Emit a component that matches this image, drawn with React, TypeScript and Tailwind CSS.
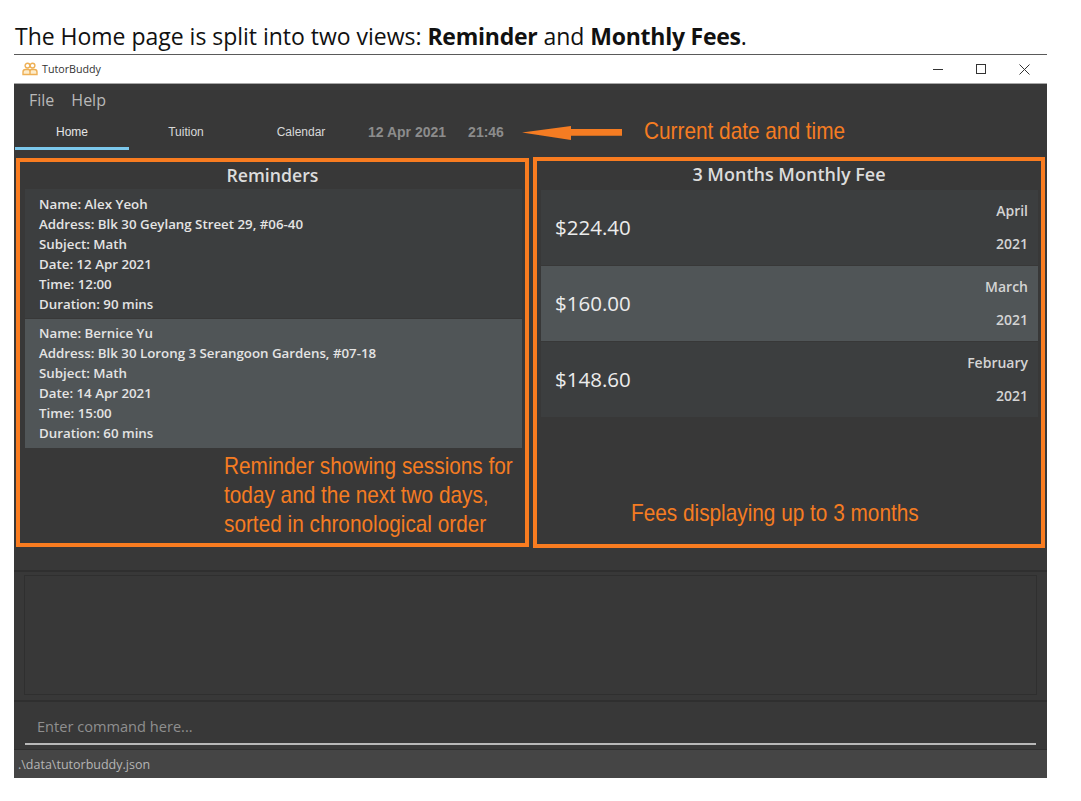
import React from 'react'

const ui = "font-['Open_Sans','Noto_Sans',sans-serif]"
// the callouts are a narrowed Arial in the picture
const note = "font-['Liberation_Sans',Arial,sans-serif] text-[#f57c22] text-[24px] leading-[29px] whitespace-nowrap origin-left scale-x-[0.866]"

const reminders = [
  { name: 'Alex Yeoh', address: 'Blk 30 Geylang Street 29, #06-40', date: '12 Apr 2021', time: '12:00', mins: 90 },
  { name: 'Bernice Yu', address: 'Blk 30 Lorong 3 Serangoon Gardens, #07-18', date: '14 Apr 2021', time: '15:00', mins: 60 },
]

const fees = [
  { amount: '$224.40', month: 'April' },
  { amount: '$160.00', month: 'March' },
  { amount: '$148.60', month: 'February' },
]

const AppIcon = () => (
  <svg width="16" height="14" viewBox="0 0 16 14" fill="none" stroke="#eeb055" strokeWidth="1.4">
    <circle cx="5.5" cy="3.6" r="2.4" />
    <circle cx="10.5" cy="3.6" r="2.4" />
    <path d="M1 12.5v-2.5c0-1.5 1.2-2.5 2.5-2.5h3c1.3 0 1.5 1 1.5 2.5v2.5zM8 12.5v-2.5c0-1.5.2-2.5 1.5-2.5h3c1.3 0 2.5 1 2.5 2.5v2.5z" fill="#fdeccb" />
  </svg>
)

const App: React.FC = () => {
  return (
    <div className={`w-[1081px] h-[801px] bg-white overflow-hidden ${ui}`}>
      <div className="ml-[14px] w-[1033px] h-[55px] border-b border-[#5a5a5a] pl-px pt-[21px]">
        <p className="text-[23px] leading-[30px] text-[#111] whitespace-nowrap tracking-[-0.02px]">
          The Home page is split into two views: <b className="tracking-[-0.25px]">Reminder</b> and <b className="tracking-[-0.25px]">Monthly Fees</b>.
        </p>
      </div>

      <div className="ml-[14px] w-[1033px]">
        {/* title bar */}
        <div className="h-[29px] flex items-center bg-white border-b border-[#a8a8a8]">
          <div className="ml-[8px] mr-[4px]"><AppIcon /></div>
          <span className="text-[10.7px] text-[#333]">TutorBuddy</span>
          <div className="ml-auto flex items-center text-[#333]">
            <svg className="mr-[33px]" width="10" height="10" viewBox="0 0 10 10"><path d="M0 5.5h10" stroke="#333" /></svg>
            <svg className="mr-[33px]" width="10" height="10" viewBox="0 0 10 10" fill="none"><rect x="0.5" y="0.5" width="9" height="9" stroke="#333" /></svg>
            <svg className="mr-[17px]" width="11" height="11" viewBox="0 0 11 11"><path d="M0.5 0.5l10 10M10.5 0.5l-10 10" stroke="#333" /></svg>
          </div>
        </div>

        <div className="h-[694px] bg-[#383838] flex flex-col">
          {/* menu */}
          <div className="h-[32px] flex items-center gap-[17px] pl-[15px] text-[16px] text-[#b9b9b9]">
            <span>File</span>
            <span>Help</span>
          </div>

          {/* tabs */}
          <div className="h-[34px] flex font-['Liberation_Sans',Arial,sans-serif]">
            <div className="ml-px w-[114px] h-[34px] border-b-[3px] border-[#7cc8ec] text-center text-[12px] leading-[33px] text-[#e6e6e6]">Home</div>
            <div className="w-[114px] text-center text-[12px] leading-[33px] text-[#d8d8d8]">Tuition</div>
            <div className="w-[116px] text-center text-[12px] leading-[33px] text-[#d8d8d8]">Calendar</div>
            <div className="ml-[9px] text-[14px] font-bold leading-[33px] text-[#8c8c8c] whitespace-nowrap">12 Apr 2021</div>
            <div className="ml-[22px] text-[14px] font-bold leading-[33px] text-[#8c8c8c]">21:46</div>
            <svg className="ml-[18px] mt-[6px]" width="100" height="20" viewBox="0 0 100 20">
              <path d="M0 10.5L49 4v3h51v6.7H49V18z" fill="#f57c22" />
            </svg>
            <div className={`${note} ml-[22px]`}>Current date and time</div>
          </div>

          {/* panels */}
          <div className="h-[391px] mt-[7px] flex">
            <div className="ml-[2px] mt-px w-[513px] h-[389px] border-[4px] border-[#f97c20] flex flex-col">
              <div className="h-[27px] text-center text-[17.7px] font-semibold leading-[26px] text-[#dcdcdc]">Reminders</div>
              <div className="ml-[5px] mr-[3px] flex flex-col gap-px">
                {reminders.map((r, i) => (
                  <div key={r.name} className={`h-[129px] pl-[14px] text-[13.3px] font-semibold leading-[20px] text-[#e4e4e4] ${i === 1 ? 'pt-[4px] bg-[#505557]' : 'pt-[5px] bg-[#3c3e3f]'}`}>
                    <p>Name: {r.name}</p>
                    <p>Address: {r.address}</p>
                    <p>Subject: Math</p>
                    <p>Date: {r.date}</p>
                    <p>Time: {r.time}</p>
                    <p>Duration: {r.mins} mins</p>
                  </div>
                ))}
              </div>
              <div className={`${note} ml-[204px] mt-[3px]`}>
                Reminder showing sessions for<br />today and the next two days,<br />sorted in chronological order
              </div>
            </div>

            <div className="ml-[4px] w-[512px] h-[391px] border-[4px] border-[#f97c20] flex flex-col">
              <div className="h-[29px] text-center text-[18px] font-semibold leading-[27px] text-[#dcdcdc]">3 Months Monthly Fee</div>
              <div className="ml-[4px] mr-[3px] flex flex-col gap-px">
                {fees.map((f, i) => (
                  <div key={f.month} className={`h-[75px] pl-[14px] pr-[10px] flex items-center justify-between ${i === 1 ? 'bg-[#505557]' : 'bg-[#3c3e3f]'}`}>
                    <span className="text-[20.5px] text-[#ececec]">{f.amount}</span>
                    <div className="pb-[2px] text-right text-[14px] font-semibold leading-[33px] text-[#d4d4d4]">
                      <p>{f.month}</p>
                      <p>2021</p>
                    </div>
                  </div>
                ))}
              </div>
              <div className={`${note} ml-[94px] mt-[81px]`}>Fees displaying up to 3 months</div>
            </div>
          </div>

          {/* result display */}
          <div className="mt-[22px] h-[132px] border-y-2 border-[#2f2f2f] px-[10px] pt-[3px] pb-[5px]">
            <div className="h-full border border-[#2f2f2f] bg-[#383838]" />
          </div>

          {/* command box */}
          <div className="h-[48px] px-[11px] border-b border-[#2f2f2f]">
            <div className="h-[43px] border-b-2 border-[#b8b8b8] pl-[12px] pt-[12px] text-[14.6px] leading-[24px] text-[#8f8f8f]">Enter command here...</div>
          </div>

          {/* status bar */}
          <div className="flex-1 bg-[#454545] pl-[4px] pt-px text-[12.5px] leading-[27px] text-[#b5b5b5]">.\data\tutorbuddy.json</div>
        </div>
      </div>
    </div>
  )
}

export default App
